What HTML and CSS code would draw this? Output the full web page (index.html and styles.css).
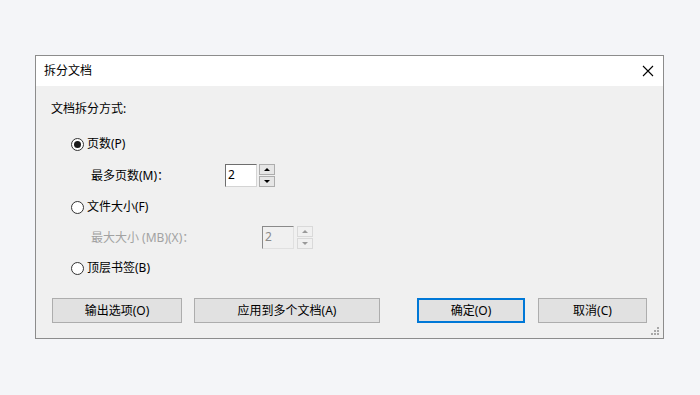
FILE: index.html
```html
<!DOCTYPE html>
<html lang="zh">
<head>
<meta charset="utf-8">
<link rel="stylesheet" href="styles.css">
</head>
<body>
<div class="dialog">
  <div class="titlebar">
    <span class="title">拆分文档</span>
    <svg class="close" width="12" height="12" viewBox="0 0 12 12"><path d="M1 1 L11 11 M11 1 L1 11" stroke="#000" stroke-width="1.1" fill="none"/></svg>
  </div>
  <div class="content">
    <div class="row label-row">文档拆分方式:</div>
    <div class="row radio-row r1"><span class="radio checked"></span><span>页数(P)</span></div>
    <div class="row field-row f1">
      <span class="field-label">最多页数(M)：</span>
      <span class="input pages-input">2</span>
      <span class="spin"><span class="spin-btn"><span class="up"></span></span><span class="spin-btn"><span class="down"></span></span></span>
    </div>
    <div class="row radio-row r2"><span class="radio"></span><span>文件大小(F)</span></div>
    <div class="row field-row f2 disabled">
      <span class="field-label">最大大小 (MB)(X)：</span>
      <span class="input size-input">2</span>
      <span class="spin"><span class="spin-btn"><span class="up"></span></span><span class="spin-btn"><span class="down"></span></span></span>
    </div>
    <div class="row radio-row r3"><span class="radio"></span><span>顶层书签(B)</span></div>
    <div class="buttons">
      <span class="btn b1">输出选项(O)</span>
      <span class="btn b2">应用到多个文档(A)</span>
      <span class="btn b3 default">确定(O)</span>
      <span class="btn b4">取消(C)</span>
    </div>
    <svg class="grip" width="9" height="9" viewBox="0 0 9 9">
      <rect x="6" y="0" width="2" height="2" fill="#a8a8a8"/>
      <rect x="3" y="3" width="2" height="2" fill="#a8a8a8"/>
      <rect x="6" y="3" width="2" height="2" fill="#a8a8a8"/>
      <rect x="0" y="6" width="2" height="2" fill="#a8a8a8"/>
      <rect x="3" y="6" width="2" height="2" fill="#a8a8a8"/>
      <rect x="6" y="6" width="2" height="2" fill="#a8a8a8"/>
    </svg>
  </div>
</div>
</body>
</html>
```
FILE: styles.css
```css
html, body {
  margin: 0;
  padding: 0;
}
body {
  background: #f4f5f8;
  width: 700px;
  height: 395px;
  padding: 55px 0 0 35px;
  box-sizing: border-box;
  font-family: "Noto Sans", "Noto Sans CJK SC", sans-serif;
  font-size: 12px;
  color: #000;
}
.dialog {
  width: 629px;
  height: 284px;
  border: 1px solid #8c8c8c;
  box-sizing: border-box;
  background: #f0f0f0;
  display: flex;
  flex-direction: column;
}
.titlebar {
  height: 30px;
  background: #fff;
  display: flex;
  align-items: center;
  justify-content: space-between;
  padding: 0 9px 0 8px;
  flex-shrink: 0;
}
.title {
  line-height: 16px;
}
.close {
  display: block;
}
.content {
  position: relative;
  flex: 1;
  display: flex;
  flex-direction: column;
}
.row {
  display: flex;
  align-items: center;
  line-height: 16px;
}
.label-row {
  height: 16px;
  margin-top: 15px;
  padding-left: 15px;
}
.radio-row {
  height: 16px;
  padding-left: 35px;
  gap: 3px;
}
.r1 { margin-top: 19px; }
.r2 { margin-top: 12px; }
.r3 { margin-top: 11px; }
.radio {
  width: 13px;
  height: 13px;
  box-sizing: border-box;
  border: 1px solid #333;
  border-radius: 50%;
  background: #fff;
  display: flex;
  align-items: center;
  justify-content: center;
}
.radio.checked::after {
  content: "";
  width: 7px;
  height: 7px;
  border-radius: 50%;
  background: #1a1a1a;
}
.field-row {
  height: 23px;
  padding-left: 55px;
}
.f1 { margin-top: 12px; }
.f2 { margin-top: 11px; }
.field-label {
  width: 134px;
  flex-shrink: 0;
}
.f2 .field-label { width: 171px; }
.input {
  width: 32px;
  height: 23px;
  box-sizing: border-box;
  border-style: solid;
  border-width: 1px;
  border-color: #6e6e6e #d4d4d4 #d4d4d4 #6e6e6e;
  background: #fff;
  padding-left: 2px;
  font-size: 12px;
  line-height: 20px;
}
.spin {
  display: flex;
  flex-direction: column;
  gap: 1px;
  margin-left: 2px;
  height: 23px;
}
.f2 .spin { margin-left: 3px; }
.spin-btn {
  width: 16px;
  height: 11px;
  box-sizing: border-box;
  border: 1px solid #adadad;
  background: #e6e6e6;
  display: flex;
  align-items: center;
  justify-content: center;
}
.up {
  width: 0;
  height: 0;
  border-left: 3px solid transparent;
  border-right: 3px solid transparent;
  border-bottom: 3px solid #000;
}
.down {
  width: 0;
  height: 0;
  border-left: 3px solid transparent;
  border-right: 3px solid transparent;
  border-top: 3px solid #000;
}
.disabled .field-label { color: #a2a2a2; }
.disabled .input {
  background: #f0f0f0;
  color: #8a8a8a;
  border-color: #8a8a8a #e0e0e0 #e0e0e0 #8a8a8a;
}
.disabled .spin-btn {
  border-color: #d9d9d9;
  background: #f0f0f0;
}
.disabled .up { border-bottom-color: #999; }
.disabled .down { border-top-color: #999; }
.buttons {
  display: flex;
  margin-top: 22px;
  padding: 0 16px 0 16px;
  height: 25px;
}
.btn {
  height: 25px;
  box-sizing: border-box;
  border: 1px solid #adadad;
  background: #e1e1e1;
  display: flex;
  align-items: center;
  justify-content: center;
  line-height: 16px;
}
.b1 { width: 130px; }
.b2 { width: 186px; margin-left: 12px; }
.b3 { width: 108px; margin-left: auto; }
.b4 { width: 109px; margin-left: 13px; }
.btn.default {
  border: 2px solid #0078d7;
}
.grip {
  position: absolute;
  right: 3px;
  bottom: 2px;
}
```
